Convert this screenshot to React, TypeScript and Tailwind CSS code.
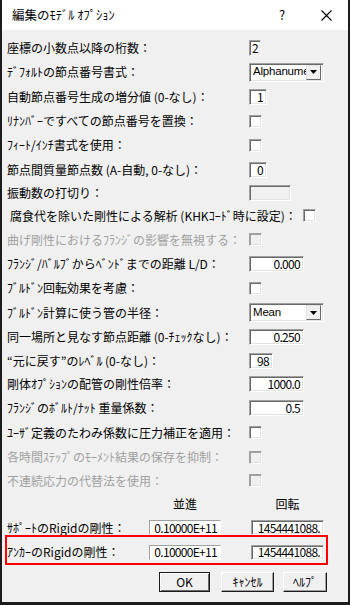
import React from "react";

const FONT = { fontFamily: '"Noto Sans CJK JP", "Noto Sans", sans-serif' };

function Sunken({ w, value, align = "right", disabled = false, h = 16 }: { w: number; value?: string; align?: "left" | "right" | "center"; disabled?: boolean; h?: number }) {
  return (
    <div
      className={`flex items-center overflow-hidden whitespace-nowrap border border-t-[#a0a0a0] border-l-[#a0a0a0] border-b-white border-r-white shadow-[inset_1px_1px_0_#696969,inset_-1px_-1px_0_#e3e3e3] ${disabled ? "bg-[#f0f0f0]" : "bg-white"} ${align === "right" ? "justify-end pr-[3px]" : align === "center" ? "justify-center" : "justify-start pl-[3px]"} text-[12px] leading-none tracking-[-0.7px] text-black`}
      style={{ width: w, height: h }}
    >
      {value}
    </div>
  );
}

function Check({ disabled = false }: { disabled?: boolean }) {
  return (
    <div
      className={`w-[13px] h-[13px] border border-t-[#a0a0a0] border-l-[#a0a0a0] border-b-white border-r-white ${disabled ? "bg-[#f0f0f0] shadow-[inset_1px_1px_0_#a0a0a0,inset_-1px_-1px_0_#e3e3e3]" : "bg-white shadow-[inset_1px_1px_0_#696969,inset_-1px_-1px_0_#e3e3e3]"}`}
    />
  );
}

function Select({ value }: { value: string }) {
  return (
    <div className="flex items-center w-[75px] h-[19px] border border-t-[#a0a0a0] border-l-[#a0a0a0] border-b-white border-r-white shadow-[inset_1px_1px_0_#696969,inset_-1px_-1px_0_#e3e3e3] bg-white p-[2px]">
      <div className="flex-1 overflow-hidden whitespace-nowrap text-[11.5px] tracking-[-0.2px] leading-none pl-[1px] text-black" style={{ fontFamily: '"Liberation Sans", Arial, sans-serif' }}>
        {value}
      </div>
      <div className="w-[15px] h-[15px] shrink-0 flex items-center justify-center bg-[#f0f0f0] border border-t-[#e3e3e3] border-l-[#e3e3e3] border-b-[#696969] border-r-[#696969]">
        <svg width="7" height="4" viewBox="0 0 7 4"><path d="M0 0h7L3.5 4z" fill="#000" /></svg>
      </div>
    </div>
  );
}

type Row = { label: string; h: number; ctrl: React.ReactNode; disabled?: boolean; pl?: number; ctrlMl?: number };

const rows: Row[] = [
  { label: "座標の小数点以降の桁数：", h: 24, ctrl: <Sunken w={12} value="2" align="center" /> },
  { label: "ﾃﾞﾌｫﾙﾄの節点番号書式：", h: 24, ctrl: <Select value="Alphanume" /> },
  { label: "自動節点番号生成の増分値 (0-なし)：", h: 25, ctrl: <Sunken w={18} value="1" /> },
  { label: "ﾘﾅﾝﾊﾞｰですべての節点番号を置換：", h: 24, ctrl: <Check /> },
  { label: "ﾌｨｰﾄ/ｲﾝﾁ書式を使用：", h: 24, ctrl: <Check /> },
  { label: "節点間質量節点数 (A-自動, 0-なし)：", h: 25, ctrl: <Sunken w={18} value="0" /> },
  { label: "振動数の打切り：", h: 22, ctrl: <Sunken w={42} disabled /> },
  { label: "腐食代を除いた剛性による解析 (KHKｺｰﾄﾞ時に設定)：", h: 23, ctrl: <Check />, pl: 8, ctrlMl: 54 },
  { label: "曲げ剛性におけるﾌﾗﾝｼﾞの影響を無視する：", h: 25, ctrl: <Check disabled />, disabled: true },
  { label: "ﾌﾗﾝｼﾞ/ﾊﾞﾙﾌﾞからﾍﾞﾝﾄﾞまでの距離 L/D：", h: 24, ctrl: <Sunken w={55} value="0.000" /> },
  { label: "ﾌﾞﾙﾄﾞﾝ回転効果を考慮：", h: 24, ctrl: <Check /> },
  { label: "ﾌﾞﾙﾄﾞﾝ計算に使う管の半径：", h: 25, ctrl: <Select value="Mean" /> },
  { label: "同一場所と見なす節点距離 (0-ﾁｪｯｸなし)：", h: 24, ctrl: <Sunken w={55} value="0.250" /> },
  { label: "“元に戻す”のﾚﾍﾞﾙ (0-なし)：", h: 23, ctrl: <Sunken w={24} value="98" /> },
  { label: "剛体ｵﾌﾟｼｮﾝの配管の剛性倍率：", h: 24, ctrl: <Sunken w={55} value="1000.0" /> },
  { label: "ﾌﾗﾝｼﾞのﾎﾞﾙﾄ/ﾅｯﾄ 重量係数：", h: 24, ctrl: <Sunken w={55} value="0.5" /> },
  { label: "ﾕｰｻﾞ定義のたわみ係数に圧力補正を適用：", h: 25, ctrl: <Check /> },
  { label: "各時間ｽﾃｯﾌﾟのﾓｰﾒﾝﾄ結果の保存を抑制：", h: 24, ctrl: <Check disabled />, disabled: true },
  { label: "不連続応力の代替法を使用：", h: 23, ctrl: <Check disabled />, disabled: true },
];

function Plain({ w, value }: { w: number; value: string }) {
  return (
    <div
      className="flex items-center justify-end pr-[3px] h-[15px] overflow-hidden whitespace-nowrap bg-white border border-t-[#a0a0a0] border-l-[#a0a0a0] border-b-white border-r-white text-[12px] leading-none tracking-[-0.7px] text-black"
      style={{ width: w }}
    >
      {value}
    </div>
  );
}

function Btn({ label, w, def = false }: { label: string; w: number; def?: boolean }) {
  return (
    <div
      className={`h-[20px] flex items-center justify-center text-[12px] leading-none text-black bg-[#f0f0f0] ${def ? "border border-[#1a1a1a] shadow-[inset_1px_1px_0_#fff,inset_-1px_-1px_0_#696969]" : "border border-t-white border-l-white border-b-[#1a1a1a] border-r-[#1a1a1a] shadow-[inset_-1px_-1px_0_#a0a0a0]"}`}
      style={{ width: w }}
    >
      {label}
    </div>
  );
}

export default function App() {
  return (
    <div className="w-[350px] h-[605px] flex flex-col bg-[#f0f0f0] border-l-2 border-r-2 border-b-[3px] border-[#1c1c1c] overflow-hidden" style={FONT}>
      <div className="h-[30px] shrink-0 bg-white flex items-center text-black">
        <div className="pl-[10px] flex-1 text-[12.5px]">編集のﾓﾃﾞﾙ ｵﾌﾟｼｮﾝ</div>
        <div className="w-[20px] text-center text-[13px] mr-[26px]">?</div>
        <div className="w-[16px] flex items-center justify-center mr-[14px]">
          <svg width="11" height="11" viewBox="0 0 11 11"><path d="M0.5 0.5L10.5 10.5M10.5 0.5L0.5 10.5" stroke="#000" strokeWidth="1.1" /></svg>
        </div>
      </div>
      <div className="flex flex-col pt-[6px] text-[12px] text-black">
        {rows.map((r, i) => (
          <div key={i} className="flex items-center" style={{ height: r.h }}>
            <div
              className={`shrink-0 whitespace-nowrap leading-none ${r.disabled ? "text-[#a0a0a0]" : "text-black"}`}
              style={{ width: 247, paddingLeft: r.pl ?? 5 }}
            >
              {r.label}
            </div>
            <div style={{ marginLeft: r.ctrlMl ?? 0 }}>{r.ctrl}</div>
          </div>
        ))}
        <div className="flex items-center h-[23px]">
          <div className="w-[147px] shrink-0" />
          <div className="w-[72px] text-center leading-none">並進</div>
          <div className="w-[73px] ml-[30px] text-center leading-none">回転</div>
        </div>
        <div className="flex items-center h-[25px]">
          <div className="w-[147px] shrink-0 pl-[5px] whitespace-nowrap leading-none">ｻﾎﾟｰﾄのRigidの剛性：</div>
          <Plain w={72} value="0.10000E+11" />
          <div className="ml-[30px]"><Sunken w={73} h={15} value="1454441088." /></div>
        </div>
        <div className="relative flex items-center h-[24px]">
          <div className="w-[147px] shrink-0 pl-[5px] whitespace-nowrap leading-none">ｱﾝｶｰのRigidの剛性：</div>
          <Plain w={72} value="0.10000E+11" />
          <div className="ml-[30px]"><Sunken w={73} h={15} value="1454441088." /></div>
          <div className="absolute left-[3px] top-[-5px] w-[323px] h-[30px] border-2 border-[#ff0000] pointer-events-none" />
        </div>
        <div className="flex items-center pl-[157px] mt-[8px]">
          <Btn label="OK" w={51} def />
          <div className="ml-[11px]"><Btn label="ｷｬﾝｾﾙ" w={53} /></div>
          <div className="ml-[9px]"><Btn label="ﾍﾙﾌﾟ" w={44} /></div>
        </div>
      </div>
    </div>
  );
}
